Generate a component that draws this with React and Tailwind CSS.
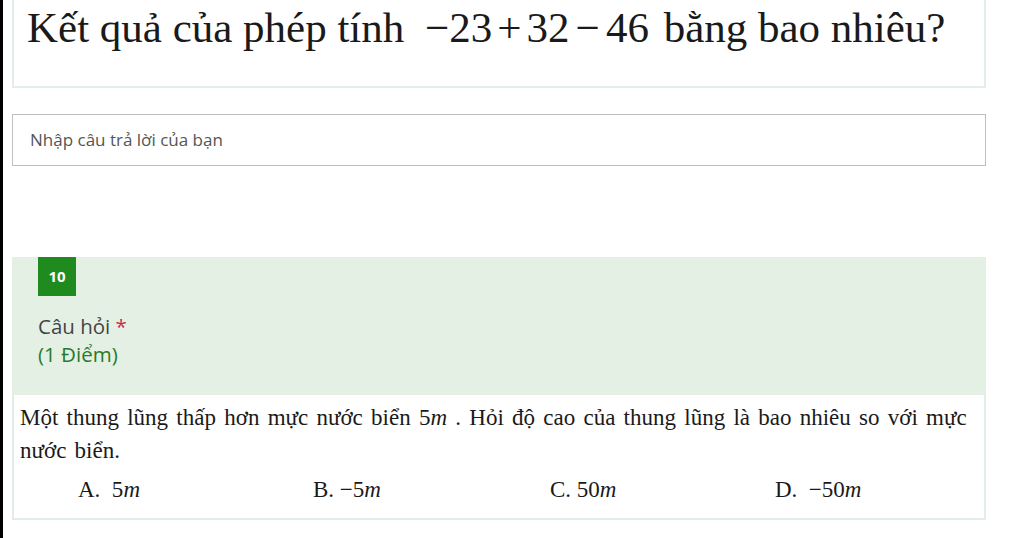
export default function App() {
  const serif = { fontFamily: '"Liberation Serif", "Times New Roman", serif' };
  const sans = { fontFamily: '"Open Sans", "Noto Sans", sans-serif' };
  return (
    <div className="w-[1024px] h-[538px] overflow-hidden bg-white border-l-[3px] border-black">
      <div className="ml-[9px] w-[974px]">
        {/* previous question: title card */}
        <div className="h-[88px] border-2 border-t-0 border-[#e5ede7] bg-white pl-[13px] pt-[3px]">
          <h1 className="text-[43px] leading-[50px] text-[#1a1a1a] whitespace-nowrap" style={serif}>
            Kết quả của phép tính <span className="ml-[10px] mr-[4px]">−23<span className="mx-[5px]">+</span>32<span className="mx-[6px]">−</span>46</span> bằng bao nhiêu?
          </h1>
        </div>

        <div className="mt-[26px] h-[52px] border border-[#bfbfbf] flex items-center pl-[17px]">
          <span className="text-[17px] text-[#555]" style={sans}>
            Nhập câu trả lời của bạn
          </span>
        </div>

        {/* question 10 */}
        <div className="mt-[91px] h-[138px] bg-[#e4f0e4] pl-[26px]">
          <div className="w-[38px] h-[39px] bg-[#1f8b1f] flex items-center justify-center">
            <span className="text-white text-[15px] font-bold" style={sans}>10</span>
          </div>
          <div className="mt-[16px] text-[20.5px] leading-[28px]" style={sans}>
            <div className="text-[#444]">
              Câu hỏi <span className="text-[#c4314b]">*</span>
            </div>
            <div className="text-[#2a7a2a]">(1 Điểm)</div>
          </div>
        </div>

        <div className="h-[125px] border-2 border-t-0 border-[#e3ede5] pl-[6px] pt-[6px] text-[23px] text-[#1a1a1a]" style={serif}>
          <p className="leading-[33px] whitespace-nowrap [word-spacing:2.5px]">
            Một thung lũng thấp hơn mực nước biển 5<i>m</i> . Hỏi độ cao của thung lũng là bao nhiêu so với mực
            <br />
            nước biển.
          </p>
          <div className="mt-[6px] grid grid-cols-[235px_237px_225px_1fr] pl-[58px] leading-[33px]">
            <span>A.&nbsp; 5<i>m</i></span>
            <span>B. −5<i>m</i></span>
            <span>C. 50<i>m</i></span>
            <span>D. &nbsp;−50<i>m</i></span>
          </div>
        </div>
      </div>
    </div>
  );
}
